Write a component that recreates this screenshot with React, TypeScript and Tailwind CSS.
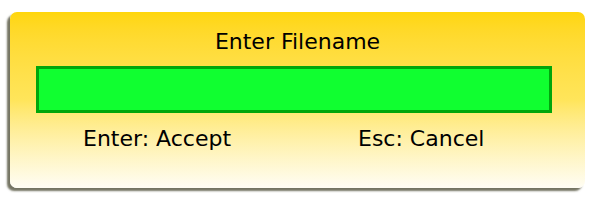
export default function App() {
  return (
    <main className="h-[200px] w-[600px] bg-white pl-[10px] pt-[12px]">
      <section
        className="flex h-[176px] w-[575px] flex-col rounded-[7px] bg-gradient-to-b from-[#ffd60a] via-[#ffe55a] to-[#fffdf4] pt-[17px] text-black shadow-[-3px_3px_2px_rgba(70,70,45,0.75)]"
        style={{ fontFamily: '"DejaVu Sans", Verdana, sans-serif' }}
      >
        <h1 className="text-center text-[22px] leading-[26px]">Enter Filename</h1>

        <div className="ml-[26px] mt-[11px] h-[47px] w-[516px] border-[3px] border-[#00a60c] bg-[#10ff30]" />

        <div className="mt-[13px] flex whitespace-nowrap pl-[73px] text-[22px] leading-[26px]">
          <p className="w-[275px] shrink-0">Enter: Accept</p>
          <p>Esc: Cancel</p>
        </div>
      </section>
    </main>
  );
}
